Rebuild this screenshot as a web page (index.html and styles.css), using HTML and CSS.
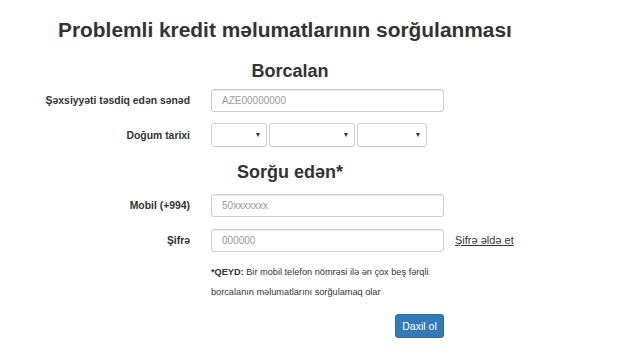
FILE: index.html
```html
<!DOCTYPE html>
<html lang="az">
<head>
<meta charset="utf-8">
<title>Problemli kredit məlumatlarının sorğulanması</title>
<link rel="stylesheet" href="styles.css">
</head>
<body>
<div class="page">
  <h1 class="title">Problemli kredit məlumatlarının sorğulanması</h1>
  <form class="form">
    <h2 class="section">Borcalan</h2>
    <div class="row">
      <label class="label">Şəxsiyyəti təsdiq edən sənəd</label>
      <input class="input" type="text" placeholder="AZE00000000">
    </div>
    <div class="row row-date">
      <label class="label">Doğum tarixi</label>
      <div class="selects">
        <div class="select s1"><span class="caret"></span></div>
        <div class="select s2"><span class="caret"></span></div>
        <div class="select s3"><span class="caret"></span></div>
      </div>
    </div>
    <h2 class="section section-2">Sorğu edən*</h2>
    <div class="row">
      <label class="label">Mobil (+994)</label>
      <input class="input" type="text" placeholder="50xxxxxxx">
    </div>
    <div class="row row-pass">
      <label class="label">Şifrə</label>
      <input class="input" type="text" placeholder="000000">
      <a class="link" href="#">Şifrə əldə et</a>
    </div>
    <p class="note"><span class="note-line"><b>*QEYD:</b> Bir mobil telefon nömrəsi ilə ən çox beş fərqli</span><span class="note-line">borcalanın məlumatlarını sorğulamaq olar</span></p>
    <div class="actions">
      <button class="btn" type="button">Daxil ol</button>
    </div>
  </form>
</div>
</body>
</html>
```
FILE: styles.css
```css
* { box-sizing: border-box; }
html, body { margin: 0; padding: 0; background: #fff; }
body { font-family: "Liberation Sans", Arial, sans-serif; color: #333; }
.page { padding: 14px 0 0 58px; }
.title {
  margin: 0;
  font-size: 20.9px;
  font-weight: bold;
  line-height: 32px;
  color: #333;
}
.form { width: 580px; margin-left: -58px; }
.section {
  margin: 0;
  text-align: center;
  font-size: 18px;
  font-weight: bold;
  line-height: 24px;
  padding-top: 13px;
  padding-bottom: 5px;
}
.section-2 { padding-top: 13px; padding-bottom: 9px; }
.row {
  display: flex;
  align-items: center;
  height: 24px;
}
.row-date { margin-top: 11px; }
.row-pass { margin-top: 11px; }
.label {
  width: 190px;
  text-align: right;
  font-size: 10.4px;
  font-weight: bold;
  color: #333;
}
.input {
  margin-left: 21px;
  width: 233px;
  height: 23px;
  border: 1px solid #ccc;
  border-radius: 3px;
  box-shadow: inset 0 1px 1px rgba(0,0,0,0.075);
  padding: 0 10px;
  font-family: "Liberation Sans", Arial, sans-serif;
  font-size: 10px;
  color: #555;
  outline: none;
}
.input::placeholder { color: #999; }
.selects { margin-left: 21px; display: flex; gap: 2px; }
.select {
  position: relative;
  height: 24px;
  border: 1px solid #ccc;
  border-radius: 3px;
}
.s1 { width: 56px; }
.s2 { width: 86px; }
.s3 { width: 70px; }
.caret {
  position: absolute;
  right: 6px;
  top: 9px;
  width: 0;
  height: 0;
  border-left: 2.5px solid transparent;
  border-right: 2.5px solid transparent;
  border-top: 4px solid #333;
}
.link {
  margin-left: 11px;
  font-size: 11px;
  color: #333;
  text-decoration: underline;
}
.note {
  margin: 10px 0 0 211px;
  width: 230px;
  font-size: 9.2px;
  line-height: 20px;
  color: #333;
}
.note-line { display: block; white-space: nowrap; }
.note b { font-weight: bold; }
.actions { margin-top: 12px; padding-left: 395px; }
.btn {
  width: 49px;
  height: 24px;
  border: 1px solid #2e6da4;
  background: #337ab7;
  color: #fff;
  border-radius: 3px;
  font-family: "Liberation Sans", Arial, sans-serif;
  font-size: 10.5px;
  padding: 0;
}
```
